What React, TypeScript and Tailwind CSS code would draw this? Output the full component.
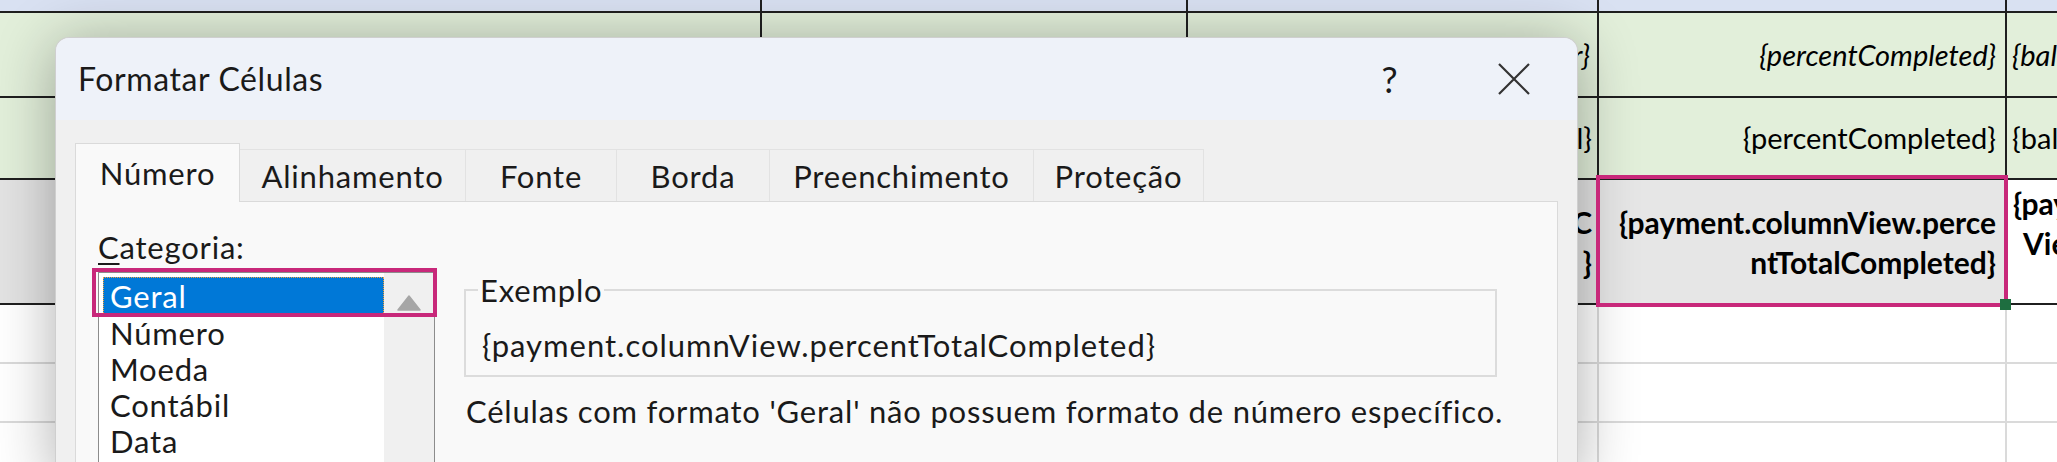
import React from "react"

const lines = "border-[#1f1f1f]"

function Sheet() {
  return (
    <div className="flex flex-col text-[29px] leading-[40px] text-black font-['Lato',sans-serif]">
      <div className={`flex h-[13px] border-b-2 ${lines} bg-[#d9e1f2]`}>
        <div className={`w-[762px] shrink-0 border-r-2 ${lines}`} />
        <div className={`w-[426px] shrink-0 border-r-2 ${lines}`} />
        <div className={`w-[411px] shrink-0 border-r-2 ${lines}`} />
        <div className={`w-[408px] shrink-0 border-r-2 ${lines}`} />
        <div className="min-w-0 flex-1" />
      </div>

      <div className={`flex h-[85px] border-b-2 ${lines} bg-[#e2efda] italic`}>
        <div className={`w-[762px] shrink-0 border-r-2 ${lines}`} />
        <div className={`w-[426px] shrink-0 border-r-2 ${lines}`} />
        <div className={`flex w-[411px] shrink-0 items-center justify-end border-r-2 ${lines} pr-[7px]`}>{"{valor}"}</div>
        <div className={`flex w-[408px] shrink-0 items-center justify-end border-r-2 ${lines} pr-[9px]`}>{"{percentCompleted}"}</div>
        <div className="flex min-w-0 flex-1 items-center overflow-hidden whitespace-nowrap pl-[5px]">{"{balanceCompleted}"}</div>
      </div>

      <div className={`flex h-[82px] border-b-2 ${lines} bg-[#e2efda]`}>
        <div className={`w-[762px] shrink-0 border-r-2 ${lines}`} />
        <div className={`w-[426px] shrink-0 border-r-2 ${lines}`} />
        <div className={`flex w-[411px] shrink-0 items-center justify-end border-r-2 ${lines} pr-[5px]`}>{"{total}"}</div>
        <div className={`flex w-[408px] shrink-0 items-center justify-end border-r-2 ${lines} pr-[9px]`}>{"{percentCompleted}"}</div>
        <div className="flex min-w-0 flex-1 items-center overflow-hidden whitespace-nowrap pl-[5px]">{"{balanceTotal}"}</div>
      </div>

      <div className={`flex h-[125px] border-b-2 ${lines} text-[30px] font-bold`}>
        <div className={`w-[762px] shrink-0 border-r-2 ${lines} bg-[#e3e3e3]`} />
        <div className={`w-[426px] shrink-0 border-r-2 ${lines} bg-[#e3e3e3]`} />
        <div className={`flex w-[411px] shrink-0 flex-col items-end justify-center border-r-2 ${lines} bg-[#e3e3e3] pr-[5px]`}>
          <span>{"{totalC"}</span>
          <span>{"}"}</span>
        </div>
        <div className={`flex w-[408px] shrink-0 flex-col items-end justify-center border-r-2 ${lines} bg-[#e6e6e6] pr-[9px]`}>
          <span>{"{payment.columnView.perce"}</span>
          <span>{"ntTotalCompleted}"}</span>
        </div>
        <div className="flex min-w-0 flex-1 flex-col overflow-hidden whitespace-nowrap bg-white pt-[3px]">
          <span className="pl-[6px]">{"{payment.column"}</span>
          <span className="pl-[16px]">{"View.balance}"}</span>
        </div>
      </div>

      {[0, 1, 2].map((i) => (
        <div key={i} className="flex h-[59px] border-b-2 border-[#dadada] bg-white">
          <div className="w-[762px] shrink-0 border-r-2 border-[#dadada]" />
          <div className="w-[426px] shrink-0 border-r-2 border-[#dadada]" />
          <div className="w-[411px] shrink-0 border-r-2 border-[#dadada]" />
          <div className="w-[408px] shrink-0 border-r-2 border-[#dadada]" />
          <div className="min-w-0 flex-1" />
        </div>
      ))}
    </div>
  )
}

const tabs = [
  { label: "Número", w: "w-[165px]" },
  { label: "Alinhamento", w: "w-[226px]" },
  { label: "Fonte", w: "w-[151px]" },
  { label: "Borda", w: "w-[153px]" },
  { label: "Preenchimento", w: "w-[264px]" },
  { label: "Proteção", w: "w-[170px]" },
]

const categories = ["Geral", "Número", "Moeda", "Contábil", "Data"]

function FormatDialog() {
  return (
    <div className="absolute left-[55px] top-[37px] h-[440px] w-[1523px] overflow-hidden rounded-t-[14px] border border-b-0 border-[#cfcfcf] bg-[#f0f0f0] text-[#1a1a1a] shadow-[0_6px_60px_rgba(0,0,0,0.32)] font-['Lato',sans-serif] tracking-[0.8px]">
      <div className="flex h-[82px] items-center bg-[#eef2f9] pl-[22px] pr-[17px]">
        <span className="flex-1 text-[32px] tracking-[0.6px]">Formatar Células</span>
        <span className="w-[92px] text-center text-[36px] leading-none">?</span>
        <span className="ml-[32px] flex w-[92px] justify-center">
          <svg width="32" height="32" viewBox="0 0 32 32" fill="none" stroke="#333" strokeWidth="2.2">
            <path d="M1 1 L31 31 M31 1 L1 31" />
          </svg>
        </span>
      </div>

      <div className="px-[19px] pt-[23px]">
        <div className="flex h-[58px] items-end text-[31px] leading-[36px]">
          {tabs.map((t, i) =>
            i === 0 ? (
              <div key={t.label} className={`relative z-10 -mb-px flex h-[59px] items-center justify-center border border-b-0 border-[#dadada] bg-[#f9f9f9] ${t.w}`}>
                {t.label}
              </div>
            ) : (
              <div key={t.label} className={`flex h-[52px] items-center justify-center border-t border-r border-[#e2e2e2] ${t.w}`}>
                {t.label}
              </div>
            )
          )}
        </div>

        <div className="flex h-[300px] border border-[#dadada] bg-[#f9f9f9] pl-[22px] pt-[27px] text-[31px] leading-[36px]">
          <div className="w-[337px] shrink-0">
            <div>
              <span className="underline decoration-2 underline-offset-4">C</span>ategoria:
            </div>
            <div className="mt-[7px] flex h-[220px] border border-[#8c8c8c] bg-white">
              <div className="flex-1 pl-[4px] pt-[4px]">
                {categories.map((c, i) => (
                  <div
                    key={c}
                    className={
                      i === 0
                        ? "border border-dotted border-[#f2a23c] bg-[#0078d7] px-[6px] text-white"
                        : "px-[7px]"
                    }
                  >
                    {c}
                  </div>
                ))}
              </div>
              <div className="flex w-[50px] justify-center bg-[#f0f0f0] pt-[22px]">
                <svg width="24" height="16" viewBox="0 0 24 16">
                  <path d="M12 1 L23 15 L1 15 Z" fill="#a6a6a6" stroke="#a6a6a6" strokeLinejoin="round" strokeWidth="1.5" />
                </svg>
              </div>
            </div>
          </div>

          <div className="ml-[29px] mt-[43px]">
            <fieldset className="w-[1033px] border-2 border-[#dcdcdc] pb-[12px] pl-[12px] pt-[19px]">
              <legend className="px-[2px]">Exemplo</legend>
              <div className="pl-[4px] tracking-[1px]">{"{payment.columnView.percentTotalCompleted}"}</div>
            </fieldset>
            <div className="mt-[16px] whitespace-nowrap pl-[2px]">
              Células com formato 'Geral' não possuem formato de número específico.
            </div>
          </div>
        </div>
      </div>
    </div>
  )
}

export default function App() {
  return (
    <div className="relative h-[462px] w-[2057px] overflow-hidden bg-white">
      <Sheet />
      <FormatDialog />
      {/* highlight boxes drawn over the screenshot */}
      <div className="absolute left-[92px] top-[268px] h-[49px] w-[345px] border-4 border-[#c8287a]" />
      <div className="absolute left-[1596px] top-[175px] h-[132px] w-[412px] border-4 border-[#c8287a]" />
      <div className="absolute left-[2000px] top-[299px] h-[11px] w-[11px] bg-[#1e6e40]" />
    </div>
  )
}
